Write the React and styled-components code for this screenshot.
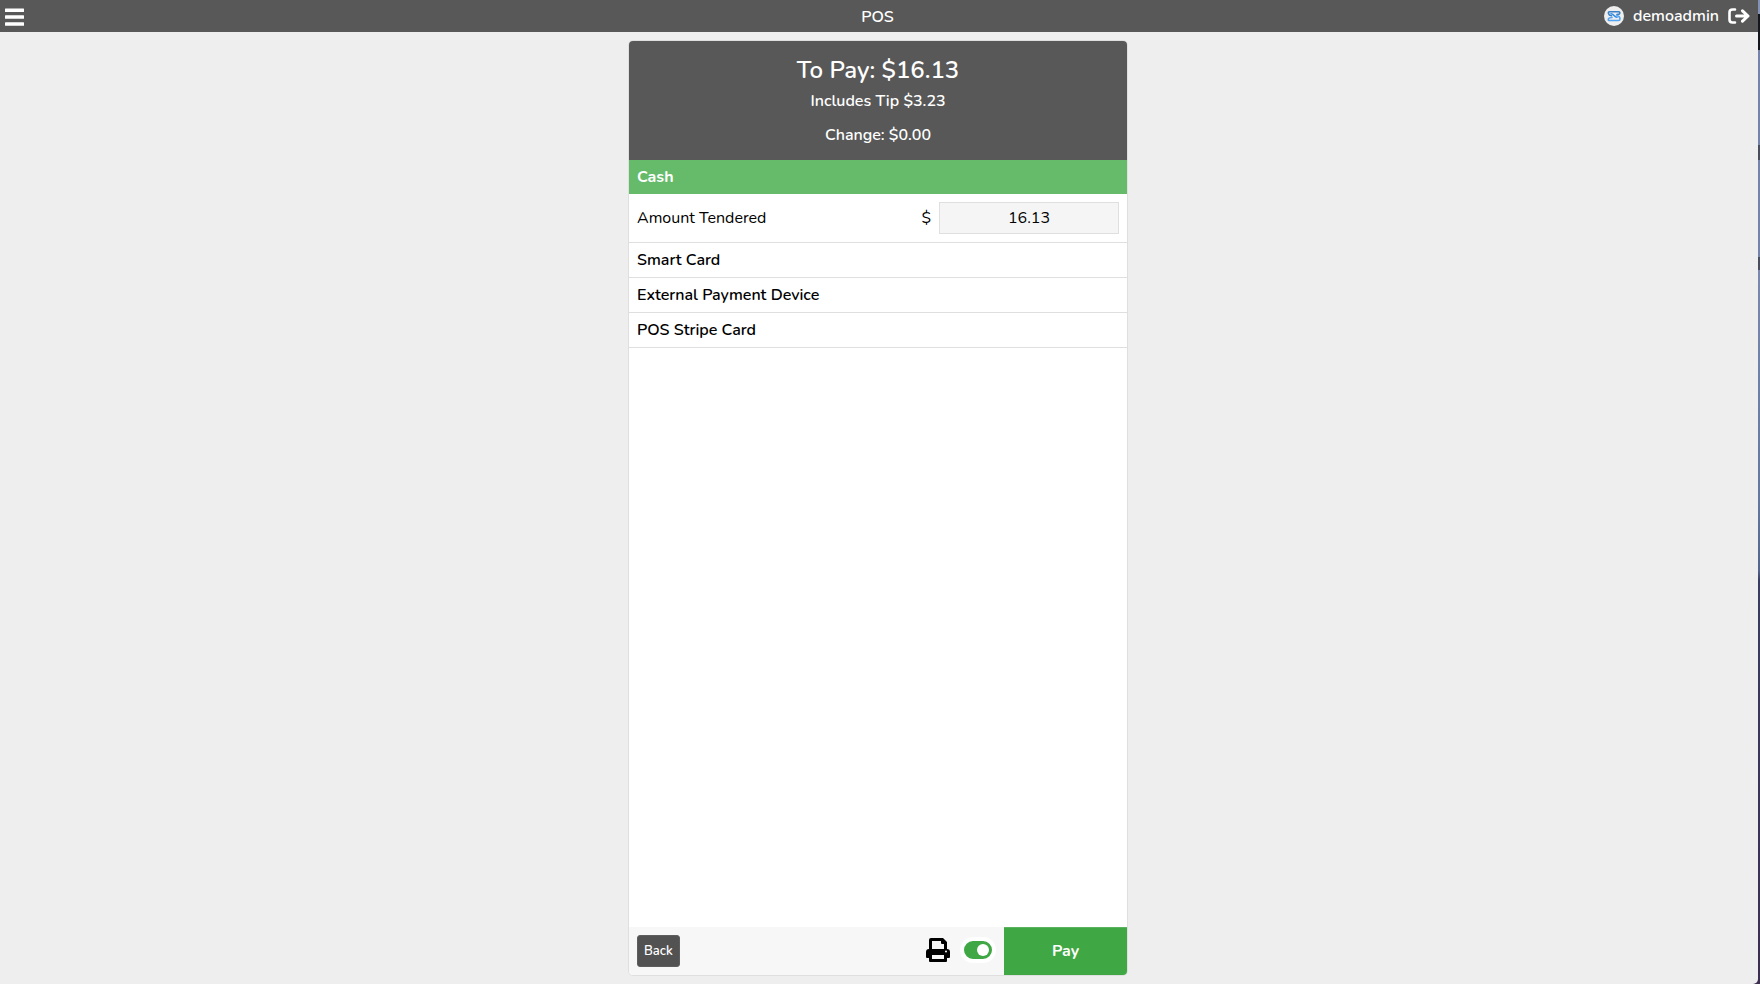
import React, { useState } from "react";
import styled, { createGlobalStyle } from "styled-components";

const GlobalStyle = createGlobalStyle`
  *, *::before, *::after { box-sizing: border-box; }
  body {
    margin: 0;
    color: #000;
    font: 16px/20px Nunito, "Open Sans", "Noto Sans", sans-serif;
  }
  button, input { font: inherit; }
`;

const Desktop = styled.div`
  display: flex;
  min-height: 100vh;
  padding-right: 2px;
  background: linear-gradient(
    #8291b4 0 14px, #15161c 14px 50px, #7583a8 50px 145px, #4a4d5c 145px 160px,
    #7583a8 160px 257px, #4a4d5c 257px 270px, #7a89ac 270px, #65779c 51%,
    #55648a 58%, #383c60 59%, #3c2f50);
`;

const Shell = styled.div`
  flex: 1;
  display: flex;
  flex-direction: column;
  border-bottom-right-radius: 5px;
  background: #eeeeee;
`;

const TopBar = styled.header`
  display: grid;
  grid-template-columns: 1fr auto 1fr;
  align-items: center;
  height: 32px;
  padding: 0 8px 0 5px;
  background: #585858;
  color: #fff;
  font-weight: 600;
`;

const IconButton = styled.button`
  display: flex;
  padding: 0;
  border: 0;
  background: none;
  color: inherit;
  cursor: pointer;
`;

const Title = styled.h1`
  margin: 0;
  padding-top: 2px;
  font-size: 16px;
  font-weight: 600;
`;

const Account = styled.div`
  display: flex;
  align-items: center;
  justify-content: flex-end;
  gap: 9px;
`;

const Main = styled.main`
  flex: 1;
  display: flex;
  justify-content: center;
  padding: 8px 2px 8px 0;
`;

const Panel = styled.form`
  display: flex;
  flex-direction: column;
  width: 500px;
  max-width: 100%;
  overflow: hidden;
  border: 1px solid #dfdfdf;
  border-radius: 5px;
  background: #fff;
`;

const Summary = styled.section`
  padding: 11px 8px 12px;
  background: #585858;
  color: #fff;
  text-align: center;
  font-weight: 600;
`;

const Total = styled.h2`
  margin: 0;
  font-size: 24px;
  line-height: 36px;
  font-weight: 600;
`;

const SummaryLine = styled.p`
  margin: 0 0 ${(p) => (p.$last ? 0 : 8)}px;
  line-height: 26px;
`;

const Method = styled.button`
  padding: 7px 8px;
  border: 0;
  border-bottom: ${(p) => (p.$active ? 0 : 1)}px solid #dfdfdf;
  background: ${(p) => (p.$active ? "#66bb6a" : "#fff")};
  color: ${(p) => (p.$active ? "#fff" : "#000")};
  text-align: left;
  font-weight: ${(p) => (p.$active ? 700 : 600)};
  cursor: pointer;
`;

const TenderRow = styled.div`
  display: flex;
  align-items: center;
  gap: 8px;
  padding: 8px;
  border-bottom: 1px solid #dfdfdf;
`;

const TenderLabel = styled.label`
  flex: 1;
`;

const AmountInput = styled.input`
  width: 180px;
  height: 32px;
  padding: 0 8px;
  border: 1px solid #dfdfdf;
  background: #f5f5f5;
  color: #000;
  text-align: center;
`;

const Footer = styled.footer`
  display: flex;
  align-items: center;
  height: 48px;
  margin-top: auto;
  padding-left: 8px;
  background: #f7f7f7;
`;

const BackButton = styled.button`
  height: 32px;
  padding: 0 6px;
  border: 1px solid #5e5e5e;
  border-radius: 3px;
  background: #525252;
  color: #fff;
  font-size: 13px;
  font-weight: 600;
  cursor: pointer;
`;

const PrintToggle = styled.label`
  display: flex;
  align-items: center;
  gap: 10px;
  margin-left: auto;
  margin-right: 8px;
  padding-bottom: 2px;
  cursor: pointer;
`;

const Switch = styled.input`
  appearance: none;
  display: flex;
  align-items: center;
  width: 36px;
  height: 26px;
  margin: 0;
  padding: 0 3px;
  border: 4px solid #fff;
  border-radius: 13px;
  background: ${(p) => (p.checked ? "#3fa743" : "#aaa")};
  cursor: pointer;

  &::before {
    content: "";
    width: 12px;
    height: 12px;
    margin-left: ${(p) => (p.checked ? "auto" : 0)};
    border-radius: 50%;
    background: #fff;
  }
`;

const PayButton = styled.button`
  align-self: stretch;
  width: 123px;
  padding: 0 0 2px;
  border: 0;
  border-top: 1px solid #5cb35f;
  background: #3fa743;
  color: #fff;
  font-weight: 700;
  cursor: pointer;
`;

const MenuIcon = () => (
  <svg width="19" height="20" viewBox="0 0 19 20" fill="currentColor" aria-hidden="true">
    <rect y="2.500" width="19" height="3.500" rx="0.500" />
    <rect y="9.250" width="19" height="3.500" rx="0.500" />
    <rect y="16.250" width="19" height="3.500" rx="0.500" />
  </svg>
);

const Avatar = () => (
  <svg width="20" height="20" viewBox="0 0 20 20" fill="none" strokeLinecap="round"
    strokeLinejoin="round" aria-hidden="true">
    <circle cx="10" cy="10" r="10" fill="#eeeeee" />
    <path d="M13 8.500l2.500-.5q1-2.200-1-2.200h-9q-1.500 0-1 1.700.5 2 3 2.300" stroke="#3b7fc4" strokeWidth="1.600" />
    <path d="M7 7.800q1.500 0 3 1.700t3 1.700" stroke="#2d8cf0" strokeWidth="1.600" />
    <path d="M13 9.500q3 1 3 3.200 0 1.800-1.500 1.800h-9q-1.800 0-1-1.800.5-.9 3.500-1.200" stroke="#55a4f2" strokeWidth="1.600" />
  </svg>
);

const SignOutIcon = () => (
  <svg width="22" height="18" viewBox="0 0 22 18" fill="none" stroke="currentColor"
    strokeWidth="3" strokeLinecap="round" strokeLinejoin="round" aria-hidden="true">
    <path d="M7 2.500H4.500Q1.500 2.500 1.500 5.500v7Q1.500 15.500 4.500 15.500H7" strokeWidth="2.600" />
    <path d="M8.500 9H20M14.500 3.800L20 9l-5.500 5.200" />
  </svg>
);

const PrinterIcon = () => (
  <svg width="24" height="24" viewBox="0 0 24 24" aria-hidden="true">
    <path fillRule="evenodd" d="M3 11V2a2 2 0 0 1 2-2h12l4 4v7a3 3 0 0 1 3 3v5a1 1 0 0 1-1 1h-2v3a1 1 0 0 1-1 1H4a1 1 0 0 1-1-1v-3H1a1 1 0 0 1-1-1v-5a3 3 0 0 1 3-3zM6 3v8h12V6h-2a1 1 0 0 1-1-1V3zM6 17v4h12v-4zM20 12.500a1 1 0 1 0 0 2a1 1 0 0 0 0-2z" />
  </svg>
);

const methods = ["Smart Card", "External Payment Device", "POS Stripe Card"];

export default function App() {
  const [amount, setAmount] = useState("16.13");
  const [print, setPrint] = useState(true);

  return (
    <Desktop>
      <GlobalStyle />
      <Shell>
        <TopBar>
          <IconButton type="button" aria-label="Menu"><MenuIcon /></IconButton>
          <Title>POS</Title>
          <Account>
            <Avatar />
            <span>demoadmin</span>
            <IconButton type="button" aria-label="Sign out"><SignOutIcon /></IconButton>
          </Account>
        </TopBar>
        <Main>
          <Panel onSubmit={(e) => e.preventDefault()}>
            <Summary>
              <Total>To Pay: $16.13</Total>
              <SummaryLine>Includes Tip $3.23</SummaryLine>
              <SummaryLine $last>Change: $0.00</SummaryLine>
            </Summary>
            <Method type="button" $active>Cash</Method>
            <TenderRow>
              <TenderLabel htmlFor="tendered">Amount Tendered</TenderLabel>
              <span>$</span>
              <AmountInput id="tendered" inputMode="decimal" value={amount}
                onChange={(e) => setAmount(e.target.value)} />
            </TenderRow>
            {methods.map((name) => (
              <Method type="button" key={name}>{name}</Method>
            ))}
            <Footer>
              <BackButton type="button">Back</BackButton>
              <PrintToggle>
                <PrinterIcon />
                <Switch type="checkbox" role="switch" aria-label="Print receipt"
                  checked={print} onChange={(e) => setPrint(e.target.checked)} />
              </PrintToggle>
              <PayButton type="submit">Pay</PayButton>
            </Footer>
          </Panel>
        </Main>
      </Shell>
    </Desktop>
  );
}
